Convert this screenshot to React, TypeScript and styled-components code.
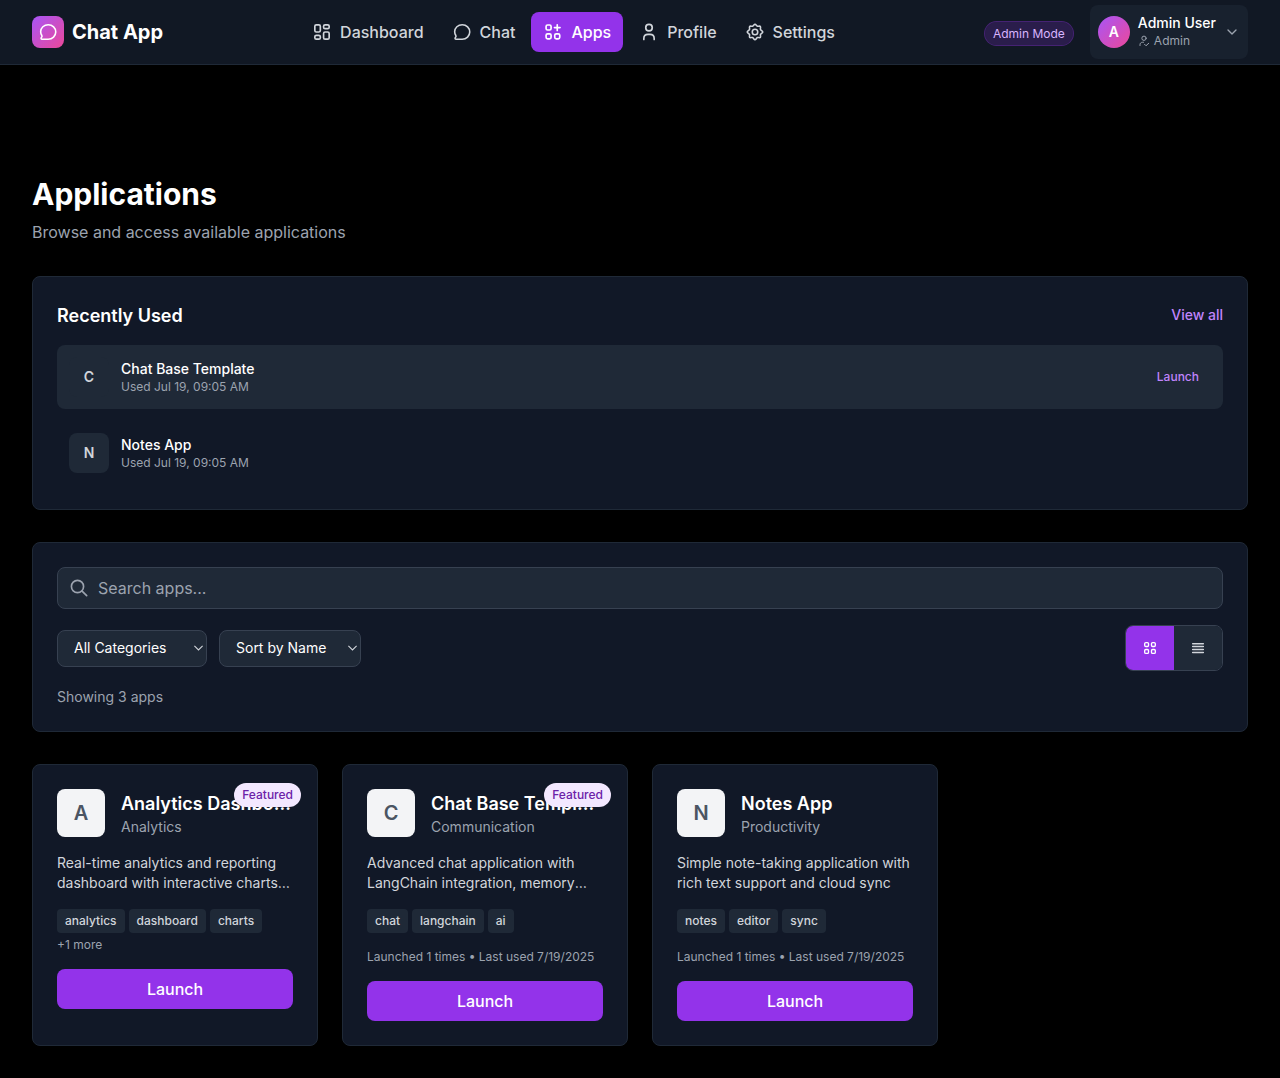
import React from "react";
import styled, { createGlobalStyle, css } from "styled-components";

const GlobalStyle = createGlobalStyle`
  *, *::before, *::after { box-sizing: border-box; }
  body {
    margin: 0;
    background: #000;
    color: #fff;
    font-family: Inter, "Liberation Sans", sans-serif;
    font-size: 16px;
    line-height: 24px;
  }
  h1, h2, h3, p { margin: 0; }
  button, input, select { font-family: inherit; margin: 0; }
`;

const Page = styled.div`
  min-height: 1078px;
  background: #000;
`;

const Header = styled.header`
  display: flex;
  align-items: center;
  justify-content: space-between;
  height: 65px;
  padding: 0 32px;
  background: #111824;
  border-bottom: 1px solid #1f2937;
`;

const Brand = styled.div`
  display: flex;
  align-items: center;
  gap: 8px;
  font-size: 20px;
  line-height: 28px;
  font-weight: 700;
`;

const BrandMark = styled.div`
  display: grid;
  place-items: center;
  width: 32px;
  height: 32px;
  border-radius: 8px;
  background: linear-gradient(135deg, #a855f7, #ec4899);
`;

const Nav = styled.nav`
  display: flex;
  gap: 4px;
`;

const NavLink = styled.a<{ $active?: boolean }>`
  display: flex;
  align-items: center;
  gap: 8px;
  padding: 8px 12px;
  border-radius: 8px;
  font-weight: 500;
  color: ${(p) => (p.$active ? "#fff" : "#d1d5db")};
  background: ${(p) => (p.$active ? "#9333ea" : "transparent")};
`;

const HeaderRight = styled.div`
  display: flex;
  align-items: center;
  gap: 16px;
`;

const ModeBadge = styled.span`
  margin-top: 3px;
  padding: 3px 8px;
  border: 1px solid rgba(147, 51, 234, 0.4);
  border-radius: 999px;
  background: rgba(147, 51, 234, 0.2);
  background-clip: padding-box;
  color: #d8b4fe;
  font-size: 12px;
  line-height: 17px;
`;

const UserMenu = styled.button`
  display: flex;
  align-items: center;
  gap: 8px;
  height: 54px;
  padding: 0 8px;
  border: 0;
  border-radius: 8px;
  background: rgba(31, 41, 55, 0.5);
  color: #fff;
  text-align: left;
`;

const Avatar = styled.span`
  display: grid;
  place-items: center;
  width: 32px;
  height: 32px;
  border-radius: 50%;
  background: linear-gradient(135deg, #a855f7, #ec4899);
  font-size: 14px;
  line-height: 20px;
  font-weight: 600;
`;

const UserText = styled.span`
  display: flex;
  flex-direction: column;
  padding-bottom: 2px;
  font-size: 14px;
  line-height: 20px;
  font-weight: 500;
`;

const UserRole = styled.span`
  display: flex;
  align-items: center;
  gap: 4px;
  font-size: 12px;
  line-height: 16px;
  font-weight: 400;
  color: #9ca3af;
`;

const Main = styled.main`
  padding: 111px 32px 32px;
`;

const Title = styled.h1`
  font-size: 30px;
  line-height: 36px;
  font-weight: 700;
`;

const Subtitle = styled.p`
  margin-top: 8px;
  color: #9ca3af;
`;

const Panel = styled.section`
  margin-top: 32px;
  padding: 24px;
  border: 1px solid #1f2937;
  border-radius: 8px;
  background: #111827;
`;

const PanelHead = styled.div`
  display: flex;
  align-items: center;
  justify-content: space-between;
  margin-bottom: 16px;
`;

const headingText = css`
  padding-top: 2px;
  font-size: 18px;
  line-height: 26px;
  font-weight: 600;
`;

const PanelTitle = styled.h2`
  ${headingText}
`;

const AccentLink = styled.a<{ $small?: boolean }>`
  color: #c084fc;
  font-weight: 500;
  font-size: ${(p) => (p.$small ? 12 : 14)}px;
  line-height: ${(p) => (p.$small ? 16 : 20)}px;
`;

const RecentList = styled.div`
  display: flex;
  flex-direction: column;
  gap: 12px;
`;

const RecentRow = styled.div<{ $active?: boolean }>`
  display: flex;
  align-items: center;
  gap: 12px;
  padding: 12px 24px 12px 12px;
  border-radius: 8px;
  background: ${(p) => (p.$active ? "#1f2937" : "transparent")};
`;

const RecentInitial = styled.div`
  display: grid;
  place-items: center;
  width: 40px;
  height: 40px;
  border-radius: 8px;
  background: #1f2937;
  color: #d1d5db;
  font-size: 14px;
  line-height: 20px;
  font-weight: 600;
`;

const RecentInfo = styled.div`
  flex: 1;
`;

const RecentName = styled.div`
  font-size: 14px;
  line-height: 20px;
  font-weight: 500;
`;

const Meta = styled.p`
  color: #9ca3af;
  font-size: 12px;
  line-height: 16px;
`;

const SearchBox = styled.label`
  display: flex;
  align-items: center;
  gap: 9px;
  height: 42px;
  padding: 0 11px;
  border: 1px solid #374151;
  border-radius: 8px;
  background: #1f2937;
  color: #9ca3af;
`;

const SearchInput = styled.input`
  flex: 1;
  padding: 0;
  border: 0;
  outline: 0;
  background: transparent;
  color: #fff;
  font-size: 16px;
  line-height: 24px;
  &::placeholder { color: #9ca3af; opacity: 1; }
`;

const Toolbar = styled.div`
  display: flex;
  align-items: center;
  gap: 12px;
  height: 46px;
  margin: 16px 0;
`;

const SelectWrap = styled.div<{ $width: number }>`
  position: relative;
  width: ${(p) => p.$width}px;
  height: 37px;
  svg {
    position: absolute;
    top: 15px;
    right: 4px;
    pointer-events: none;
  }
`;

const Select = styled.select`
  display: block;
  appearance: none;
  width: 100%;
  height: 37px;
  padding: 7px 16px 9px;
  border: 1px solid #374151;
  border-radius: 8px;
  background-color: #1f2937;
  color: #fff;
  font-size: 14px;
  line-height: 19px;
`;

const ViewToggle = styled.div`
  display: flex;
  margin-left: auto;
  overflow: hidden;
  border: 1px solid #374151;
  border-radius: 8px;
`;

const ViewButton = styled.button<{ $active?: boolean }>`
  display: grid;
  place-items: center;
  width: 48px;
  height: 44px;
  padding: 0;
  border: 0;
  color: ${(p) => (p.$active ? "#fff" : "#d1d5db")};
  background: ${(p) => (p.$active ? "#9333ea" : "#1f2937")};
`;

const Count = styled.p`
  color: #9ca3af;
  font-size: 14px;
  line-height: 20px;
`;

const Grid = styled.div`
  display: grid;
  grid-template-columns: repeat(4, minmax(0, 1fr));
  gap: 24px;
  margin-top: 32px;
`;

const Card = styled.article`
  position: relative;
  padding: 24px;
  border: 1px solid #1f2937;
  border-radius: 8px;
  background: #111827;
`;

const Featured = styled.span`
  position: absolute;
  top: 17.5px;
  right: 16px;
  padding: 4px 8px;
  border-radius: 999px;
  background: #f3e8ff;
  color: #6b21a8;
  font-size: 12px;
  line-height: 16px;
  font-weight: 500;
`;

const CardHead = styled.div`
  display: flex;
  gap: 16px;
  margin-bottom: 16px;
`;

const CardInitial = styled.div`
  display: grid;
  flex: none;
  place-items: center;
  width: 48px;
  height: 48px;
  border-radius: 8px;
  background: #f3f4f6;
  color: #4b5563;
  font-size: 20px;
  line-height: 28px;
  font-weight: 600;
`;

const CardHeading = styled.div`
  flex: 1;
  min-width: 0;
`;

const CardTitle = styled.h3`
  ${headingText}
  overflow: hidden;
  text-overflow: ellipsis;
  white-space: nowrap;
`;

const Description = styled.p`
  display: -webkit-box;
  overflow: hidden;
  -webkit-line-clamp: 2;
  -webkit-box-orient: vertical;
  margin-bottom: 16px;
  color: #d1d5db;
  font-size: 14px;
  line-height: 20px;
`;

const Tags = styled.div`
  display: flex;
  flex-wrap: wrap;
  gap: 4px;
  margin-bottom: 16px;
`;

const tagText = css`
  font-size: 12px;
  line-height: 16px;
`;

const Tag = styled.span`
  ${tagText}
  padding: 4px 8px;
  border-radius: 4px;
  background: #1f2937;
  color: #d1d5db;
  font-weight: 500;
`;

const MoreTags = styled.span`
  ${tagText}
  flex-basis: 100%;
  color: #9ca3af;
`;

const LaunchButton = styled.button`
  display: block;
  width: 100%;
  height: 40px;
  margin-top: 16px;
  padding: 0;
  border: 0;
  border-radius: 8px;
  background: #9333ea;
  color: #fff;
  font-size: 16px;
  line-height: 24px;
  font-weight: 500;
`;

type IconProps = { size?: number; stroke?: number; children: React.ReactNode };

const Icon = ({ size = 20, stroke = 2, children }: IconProps) => (
  <svg width={size} height={size} viewBox="0 0 24 24" fill="none" stroke="currentColor"
    strokeWidth={stroke} strokeLinecap="round" strokeLinejoin="round">
    {children}
  </svg>
);

const DashboardIcon = () => (
  <Icon>
    <rect x="3.4" y="3.4" width="6.6" height="8.6" rx="1.8" />
    <rect x="13.9" y="3.4" width="6.7" height="4.6" rx="1.8" />
    <rect x="3.4" y="16" width="6.6" height="4.6" rx="1.8" />
    <rect x="13.9" y="12" width="6.7" height="8.6" rx="1.8" />
  </Icon>
);

const ChatIcon = ({ size = 20 }: { size?: number }) => (
  <Icon size={size} stroke={1.9}>
    <path d="M12.3 3.3C7.2 3.3 3.2 7 3.2 11.6c0 1.8.6 3.3 1.4 4.6.5.8.2 1.7-.5 2.5-.8 1-.4 1.9.8 1.9h7.3c5.1 0 9.1-3.8 9.1-8.6s-3.9-8.7-9-8.7Z" />
  </Icon>
);

const AppsIcon = () => (
  <Icon>
    <rect x="3.7" y="3.6" width="6" height="6" rx="1.8" />
    <rect x="3.7" y="14.2" width="6" height="6" rx="1.8" />
    <rect x="14.1" y="14.2" width="6" height="6" rx="1.8" />
    <path d="M17.1 3.3v6.8M13.7 6.7h6.8" />
  </Icon>
);

const ProfileIcon = () => (
  <Icon>
    <circle cx="12" cy="6.8" r="3.9" />
    <path d="M5.8 20.9v-1.2c0-3 2.2-4.9 5-4.9h2.4c2.8 0 5 1.9 5 4.9v1.2" />
  </Icon>
);

const SettingsIcon = () => (
  <Icon stroke={1.9}>
    <path d="M12 2.7c1.2 0 1.7 2 2.9 2.4 1.200.4 2.700-.7 3.500.2s-.3 2.500.2 3.700c.5 1.200 2.700 1.800 2.700 3s-2.200 1.700-2.700 2.900c-.5 1.200.6 2.800-.2 3.600s-2.300-.3-3.500.2c-1.200.5-1.700 2.600-2.900 2.600s-1.700-2.100-2.900-2.600c-1.200-.5-2.700.6-3.500-.2s.3-2.400-.2-3.600c-.5-1.200-2.700-1.700-2.700-2.900s2.200-1.800 2.700-3c.5-1.200-.6-2.800.2-3.700s2.300.2 3.500-.2c1.200-.4 1.700-2.400 2.900-2.400Z" />
    <circle cx="12" cy="12" r="3.3" />
  </Icon>
);

const RoleIcon = () => (
  <Icon size={12}>
    <circle cx="12" cy="6.5" r="4.3" />
    <path d="M4 21v-1.5c0-3 2-5 5-5h2M13 18.500l3 3 5.500-5" />
  </Icon>
);

const Dropdown = ({ width, label }: { width: number; label: string }) => (
  <SelectWrap $width={width}>
    <Select><option>{label}</option></Select>
    <svg width="9" height="6" viewBox="0 0 9 6" fill="none" stroke="#d1d5db" strokeWidth="1.1">
      <path d="m.4.900 4.100 4.100L8.600.9" />
    </svg>
  </SelectWrap>
);

const navItems = [
  { label: "Dashboard", icon: <DashboardIcon /> },
  { label: "Chat", icon: <ChatIcon /> },
  { label: "Apps", icon: <AppsIcon />, active: true },
  { label: "Profile", icon: <ProfileIcon /> },
  { label: "Settings", icon: <SettingsIcon /> },
];

const recent = [
  { name: "Chat Base Template", active: true },
  { name: "Notes App", active: false },
];

const apps = [
  {
    name: "Analytics Dashboard",
    category: "Analytics",
    description: "Real-time analytics and reporting dashboard with interactive charts and visualizations",
    tags: ["analytics", "dashboard", "charts"],
    more: 1,
    featured: true,
    usage: "",
  },
  {
    name: "Chat Base Template",
    category: "Communication",
    description: "Advanced chat application with LangChain integration, memory management and streaming",
    tags: ["chat", "langchain", "ai"],
    more: 0,
    featured: true,
    usage: "Launched 1 times • Last used 7/19/2025",
  },
  {
    name: "Notes App",
    category: "Productivity",
    description: "Simple note-taking application with rich text support and cloud sync",
    tags: ["notes", "editor", "sync"],
    more: 0,
    featured: false,
    usage: "Launched 1 times • Last used 7/19/2025",
  },
];

export default function App() {
  return (
    <Page>
      <GlobalStyle />
      <Header>
        <Brand>
          <BrandMark><ChatIcon /></BrandMark>
          Chat App
        </Brand>
        <Nav>
          {navItems.map((item) => (
            <NavLink key={item.label} $active={item.active}>
              {item.icon}
              {item.label}
            </NavLink>
          ))}
        </Nav>
        <HeaderRight>
          <ModeBadge>Admin Mode</ModeBadge>
          <UserMenu>
            <Avatar>A</Avatar>
            <UserText>
              Admin User
              <UserRole><RoleIcon />Admin</UserRole>
            </UserText>
            <Icon size={16}><path d="m6 9 6 6 6-6" stroke="#9ca3af" /></Icon>
          </UserMenu>
        </HeaderRight>
      </Header>
      <Main>
        <Title>Applications</Title>
        <Subtitle>Browse and access available applications</Subtitle>
        <Panel>
          <PanelHead>
            <PanelTitle>Recently Used</PanelTitle>
            <AccentLink>View all</AccentLink>
          </PanelHead>
          <RecentList>
            {recent.map((app) => (
              <RecentRow key={app.name} $active={app.active}>
                <RecentInitial>{app.name[0]}</RecentInitial>
                <RecentInfo>
                  <RecentName>{app.name}</RecentName>
                  <Meta>Used Jul 19, 09:05 AM</Meta>
                </RecentInfo>
                {app.active && <AccentLink $small>Launch</AccentLink>}
              </RecentRow>
            ))}
          </RecentList>
        </Panel>
        <Panel>
          <SearchBox>
            <Icon><circle cx="10.2" cy="10.2" r="7.3" /><path d="m15.700 15.700 5.500 5.500" /></Icon>
            <SearchInput placeholder="Search apps..." />
          </SearchBox>
          <Toolbar>
            <Dropdown width={150} label="All Categories" />
            <Dropdown width={142} label="Sort by Name" />
            <ViewToggle>
              <ViewButton $active>
                <Icon size={16}>
                  <rect x="4" y="4" width="5.8" height="5.8" rx="1.8" />
                  <rect x="14.2" y="4" width="5.8" height="5.8" rx="1.8" />
                  <rect x="4" y="14.2" width="5.8" height="5.8" rx="1.8" />
                  <rect x="14.2" y="14.2" width="5.8" height="5.8" rx="1.8" />
                </Icon>
              </ViewButton>
              <ViewButton>
                <Icon size={16} stroke={2.2}>
                  <path d="M4 5.500h16M4 9.900h16M4 14.300h16M4 18.600h16" />
                </Icon>
              </ViewButton>
            </ViewToggle>
          </Toolbar>
          <Count>Showing 3 apps</Count>
        </Panel>
        <Grid>
          {apps.map((app) => (
            <Card key={app.name}>
              <CardHead>
                <CardInitial>{app.name[0]}</CardInitial>
                <CardHeading>
                  <CardTitle>{app.name}</CardTitle>
                  <Count>{app.category}</Count>
                </CardHeading>
              </CardHead>
              <Description>{app.description}</Description>
              <Tags>
                {app.tags.map((tag) => <Tag key={tag}>{tag}</Tag>)}
                {app.more > 0 && <MoreTags>+{app.more} more</MoreTags>}
              </Tags>
              {app.usage && <Meta>{app.usage}</Meta>}
              <LaunchButton>Launch</LaunchButton>
              {app.featured && <Featured>Featured</Featured>}
            </Card>
          ))}
        </Grid>
      </Main>
    </Page>
  );
}
